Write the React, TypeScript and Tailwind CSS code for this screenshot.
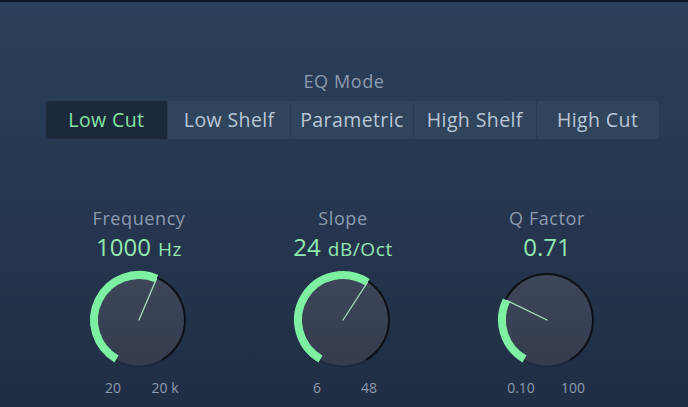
/**
 * Low Cut EQ panel — mode selector plus three rotary knobs.
 */
const MODES = ['Low Cut', 'Low Shelf', 'Parametric', 'High Shelf', 'High Cut'];

interface KnobSpec {
  label: string;
  value: string;
  unit?: string;
  angle: number; // degrees from top, clockwise
  min: string;
  max: string;
}

const KNOBS: KnobSpec[] = [
  { label: 'Frequency', value: '1000', unit: 'Hz', angle: 23, min: '20', max: '20 k' },
  { label: 'Slope', value: '24', unit: 'dB/Oct', angle: 33, min: '6', max: '48' },
  { label: 'Q Factor', value: '0.71', angle: -64, min: '0.10', max: '100' },
];

const START = -150;
const END = 150;

function pt(cx: number, cy: number, r: number, a: number) {
  const rad = (a * Math.PI) / 180;
  return [cx + r * Math.sin(rad), cy - r * Math.cos(rad)];
}

function arc(cx: number, cy: number, r: number, a0: number, a1: number) {
  const [x0, y0] = pt(cx, cy, r, a0);
  const [x1, y1] = pt(cx, cy, r, a1);
  const large = a1 - a0 > 180 ? 1 : 0;
  return `M ${x0} ${y0} A ${r} ${r} 0 ${large} 1 ${x1} ${y1}`;
}

function Knob({ angle }: { angle: number }) {
  const c = 55;
  const [lx, ly] = pt(c, c, 45, angle);
  return (
    <svg width="110" height="110" viewBox="0 0 110 110">
      <defs>
        <linearGradient id="body" x1="0" y1="0" x2="0" y2="1">
          <stop offset="0" stopColor="#3e465a" />
          <stop offset="1" stopColor="#343c4e" />
        </linearGradient>
      </defs>
      <circle cx={c} cy={c + 1.5} r="46" fill="#1a2433" opacity="0.5" />
      <circle cx={c} cy={c} r="45.5" fill="url(#body)" />
      <path d={arc(c, c, 46, angle, END)} stroke="#0d1017" strokeWidth="2" fill="none" />
      <path d={arc(c, c, 45, START, angle)} stroke="#7ef0a2" strokeWidth="8" fill="none" />
      <line x1={c} y1={c} x2={lx} y2={ly} stroke="#a8dcbc" strokeWidth="1.3" strokeLinecap="round" />
    </svg>
  );
}

export default function App() {
  return (
    <div
      className="w-[688px] h-[407px] overflow-hidden bg-gradient-to-b from-[#2c405b] to-[#1f2e44] flex flex-col items-center"
      style={{ fontFamily: '"Open Sans", Lato, sans-serif' }}
    >
      <div className="h-[2px] w-full bg-[#0c1826]" />
      <div className="mt-[68px] text-[18px] leading-[22px] tracking-[0.6px] text-[#8d9bad]">EQ Mode</div>
      <div className="mt-[9px] ml-[16px] flex h-[38px] w-[613px] rounded-[5px] overflow-hidden bg-[#30445c]">
        {MODES.map((m, i) => (
          <div
            key={m}
            className={
              i === 0
                ? 'flex-1 flex items-center justify-center bg-[#1b2a3a] text-[#86e3a4] text-[19.5px] tracking-[0.4px]'
                : 'flex-1 flex items-center justify-center border-l border-[#283b51] text-[#b9c7d6] text-[19.5px] tracking-[0.4px]'
            }
          >
            {m}
          </div>
        ))}
      </div>
      <div className="mt-[68px] flex w-[612px] -translate-x-[1px]">
        {KNOBS.map((k) => (
          <div key={k.label} className="w-[204px] flex flex-col items-center">
            <div className="text-[18px] leading-[22px] tracking-[0.6px] text-[#8d9bad]">{k.label}</div>
            <div className="mt-[4px] leading-[28px] text-[#93e8b0]">
              <span className="text-[24px]">{k.value}</span>
              {k.unit && <span className="text-[19px] tracking-[0.6px] ml-[7px]">{k.unit}</span>}
            </div>
            <div className="mt-[1px]">
              <Knob angle={k.angle} />
            </div>
            <div className="mt-[5px] flex gap-[12px] text-[14px] leading-[16px] text-[#8d9bad]">
              <span className="w-[40px] text-center">{k.min}</span>
              <span className="w-[40px] text-center">{k.max}</span>
            </div>
          </div>
        ))}
      </div>
    </div>
  );
}
